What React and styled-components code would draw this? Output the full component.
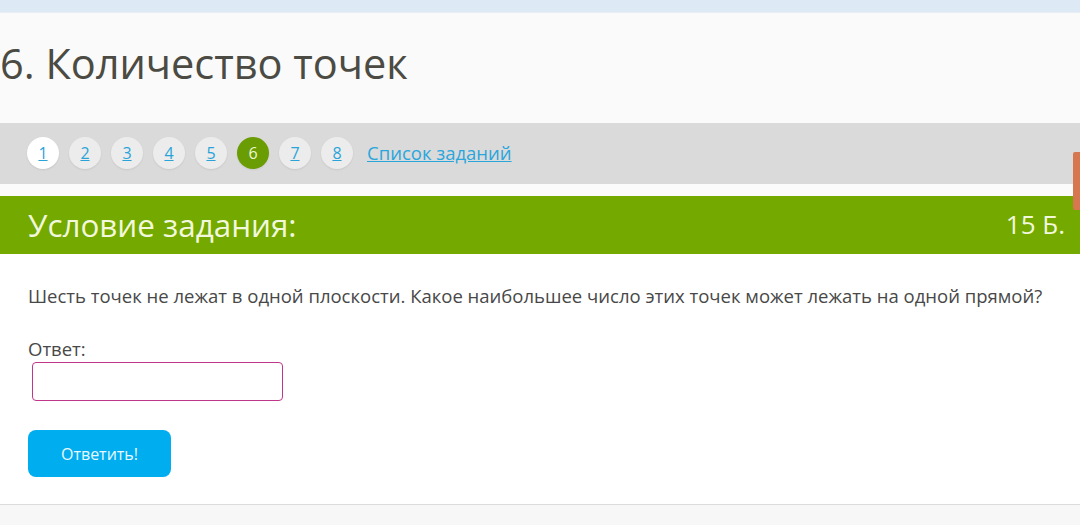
import React from 'react';
import styled, { createGlobalStyle } from 'styled-components';

const GlobalStyle = createGlobalStyle`
  html, body { margin: 0; padding: 0; background: #f7f7f7; }
  body { font-family: "Open Sans", "Noto Sans", sans-serif; }
`;

const pages = [1, 2, 3, 4, 5, 6, 7, 8];

const App = () => {
    return (
        <Page>
            <GlobalStyle />
            <TopStrip />
            <TitleBar>
                <Title>6. Количество точек</Title>
            </TitleBar>
            <Nav>
                {pages.map((n) => (
                    <PageDot key={n} active={n === 6} current={n === 1}>
                        {n}
                    </PageDot>
                ))}
                <ListLink href="#">Список заданий</ListLink>
                <SideTab />
            </Nav>
            <Spacer />
            <TaskHeader>
                <TaskTitle>Условие задания:</TaskTitle>
                <Points>15 Б.</Points>
            </TaskHeader>
            <Body>
                <Question>
                    Шесть точек не лежат в одной плоскости. Какое наибольшее число этих точек может лежать на одной прямой?
                </Question>
                <Label>Ответ:</Label>
                <AnswerInput type="text" />
                <Submit>Ответить!</Submit>
            </Body>
        </Page>
    );
};

export default App;

// Стили

const Page = styled.div` width: 1080px; height: 525px; overflow: hidden; display: flex; flex-direction: column; `;

const TopStrip = styled.div` height: 12px; background: #dde9f4; border-bottom: 1px solid #e8eef3; `;

const TitleBar = styled.div` height: 110px; background: #fafafa; display: flex; align-items: center; `;

const Title = styled.h1` margin: 0 0 10px 0; font-weight: 400; font-size: 41.5px; color: #4b4b43; `;

const Nav = styled.div` position: relative; height: 61px; background: #dadada; display: flex; align-items: center; gap: 10px; padding: 0 0 2px 27px; box-sizing: border-box; `;

const PageDot = styled.a` width: 32px; height: 32px; border-radius: 50%; display: flex; align-items: center; justify-content: center; font-size: 16px; text-decoration: ${(p) => (p.active ? 'none' : 'underline')}; color: ${(p) => (p.active ? '#eef7d0' : '#2aa4d8')}; background: ${(p) => (p.active ? '#6a9c04' : p.current ? '#ffffff' : '#ececec')}; box-shadow: 0 1px 2px rgba(0,0,0,0.08); `;

const ListLink = styled.a` margin-left: 4px; font-size: 18.5px; color: #2aa6dd; text-decoration: underline; `;

const SideTab = styled.div` position: absolute; right: 0; top: 29px; width: 7px; height: 58px; background: #d6774f; border-radius: 2px 0 0 2px; z-index: 2; `;

const Spacer = styled.div` height: 12px; background: #fbfbfb; `;

const TaskHeader = styled.div` height: 58px; background: #74a900; display: flex; align-items: center; justify-content: space-between; padding: 0 15px 0 28px; `;

const TaskTitle = styled.h2` margin: 0 0 2px 0; font-weight: 400; font-size: 31.4px; color: #f2f8dc; `;

const Points = styled.span` font-size: 26px; color: #f2f8dc; margin-bottom: 2px; `;

const Body = styled.div` height: 250px; background: #fff; border-bottom: 1px solid #dcdcdc; padding: 0 28px; display: flex; flex-direction: column; align-items: flex-start; `;

const Question = styled.p` margin: 29px 0 0 0; font-size: 18.5px; color: #484848; `;

const Label = styled.div` margin-top: 28px; font-size: 18.5px; color: #484848; `;

const AnswerInput = styled.input` margin: 1px 0 0 4px; width: 251px; height: 39px; box-sizing: border-box; border: 1px solid #c0378a; border-radius: 4px; background: #fff; outline: none; `;

const Submit = styled.button` margin-top: 29px; width: 143px; height: 47px; border: none; border-radius: 8px; background: #00adef; color: #e8f8ff; font-family: "Open Sans", sans-serif; font-size: 16px; `;
